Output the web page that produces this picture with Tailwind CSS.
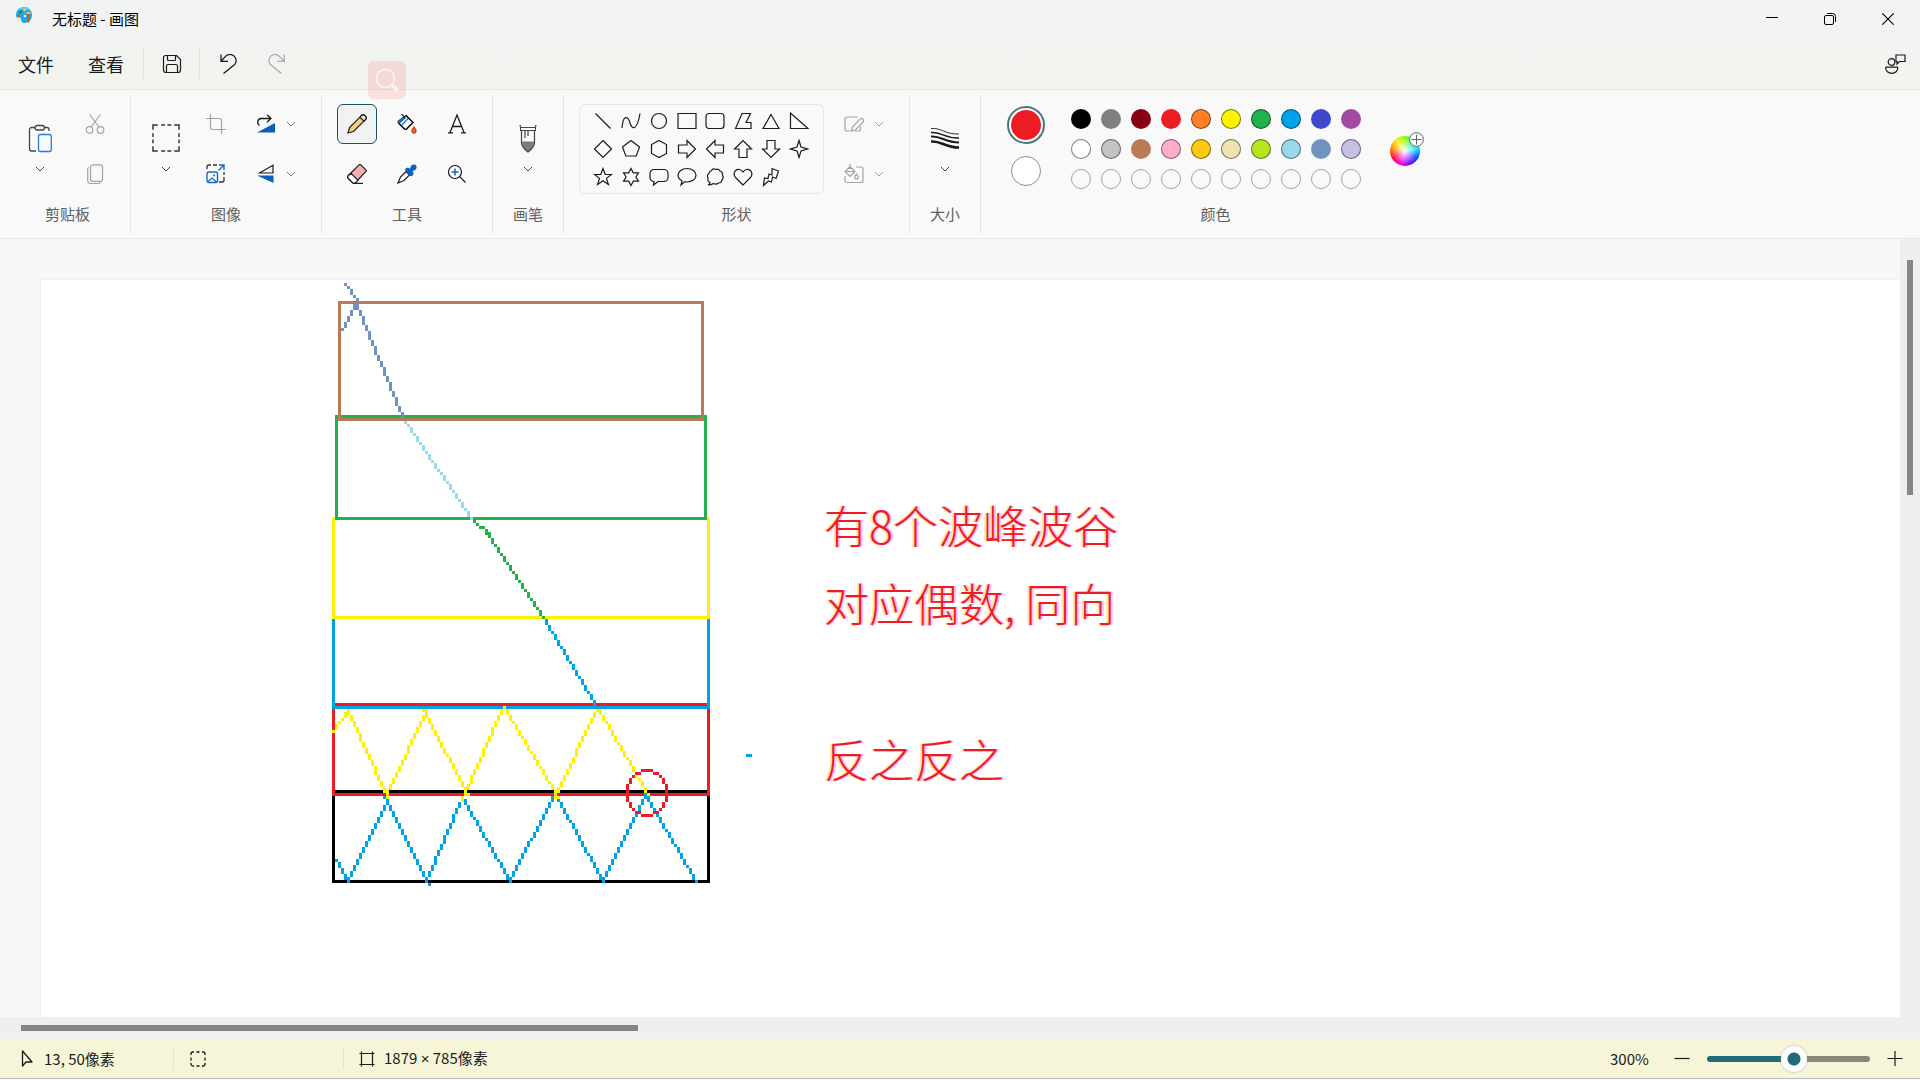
<!DOCTYPE html>
<html lang="zh-CN">
<head>
<meta charset="utf-8">
<title>无标题 - 画图</title>
<script src="https://cdn.jsdelivr.net/npm/@tailwindcss/browser@4"></script>
</head>
<body class="h-screen overflow-hidden flex flex-col pb-px bg-[#f9f9f9] text-[#1b1b1b] font-['Noto_Sans_CJK_SC',sans-serif] select-none">

<svg class="hidden">
  <symbol id="chev" viewBox="0 0 10 10"><path d="M1 3l4 4 4-4" fill="none" stroke="currentColor" stroke-width="1"/></symbol>
</svg>

<!-- Title bar and menu -->
<header class="relative flex flex-col bg-linear-to-b from-[#f1f4f4] to-[#f2f3ee] border-b border-[#e6e8e4]">
  <div class="flex items-center h-[38px] pl-4 pr-[3px]">
    <svg class="size-4 mb-2" viewBox="0 0 16 16">
      <path d="M8 0C3.400 0 0 3.600 0 8c0 2 1.200 2.800 2.600 2.500 1.500-.3 2.600.4 2.500 2C5 14.600 6 16 8.200 16 12.600 16 16 12.600 16 8S12.600 0 8 0z" fill="#1ba8ec"/>
      <path d="M8 0C5 0 2.500 1.600 1 4c3-2 9-3 14 .5C13.500 1.800 11 0 8 0z" fill="#55d0fa"/>
      <circle cx="8.500" cy="2.800" r="1.500" fill="#ffc928"/><circle cx="4.500" cy="5" r="1.600" fill="#17883b"/><circle cx="2.800" cy="8.800" r="1.300" fill="#e8502a"/><circle cx="9" cy="9" r="1.300" fill="#fff"/>
      <path d="M10.300 5.500h4.200v2.200l-1.200 1.100V15.500h-1.600V8.800l-1.400-1.100z" fill="#a4642b"/><path d="M10.300 5.200h4.200V7h-4.200z" fill="#e4c79a"/>
    </svg>
    <h1 class="ml-5 text-[15px] leading-5 text-black">无标题 - 画图</h1>
    <div class="ml-auto flex h-full">
      <button aria-label="最小化" class="w-[58px] grid place-items-center"><svg class="size-3" viewBox="0 0 12 12"><path d="M0 4.500h12" stroke="#000"/></svg></button>
      <button aria-label="还原" class="w-[58px] grid place-items-center"><svg class="size-3" viewBox="0 0 12 12" fill="none" stroke="#000"><rect x=".5" y="2.500" width="9" height="9" rx="1.500"/><path d="M3 .5h5.500a3 3 0 013 3V9"/></svg></button>
      <button aria-label="关闭" class="w-[58px] grid place-items-center"><svg class="size-3" viewBox="0 0 12 12"><path d="M.3.3l11.400 11.400M11.700.3L.3 11.700" stroke="#000" stroke-width="1.100"/></svg></button>
    </div>
  </div>
  <nav class="flex items-center h-[51px] pl-px pr-[14px]">
    <button class="w-[70px] text-[18px] leading-6">文件</button>
    <button class="w-[70px] text-[18px] leading-6">查看</button>
    <div class="ml-[2px] w-px h-[30px] bg-[#e2e4e0]"></div>
    <button aria-label="保存" class="w-[55px] grid place-items-center"><svg class="size-5" viewBox="0 0 20 20" fill="none" stroke="#1b1b1b" stroke-width="1.200"><path d="M3 1.500h11.500l4 4V16a2.500 2.500 0 01-2.500 2.500H4A2.500 2.500 0 011.500 16V3.500A2 2 0 013.500 1.500zM5.500 1.500v4a1 1 0 001 1h6a1 1 0 001-1v-4M4.500 18.500V12A1.500 1.500 0 016 10.500h8a1.500 1.500 0 011.500 1.500v6.500"/></svg></button>
    <div class="w-px h-[30px] bg-[#e2e4e0]"></div>
    <button aria-label="撤消" class="w-[57px] grid place-items-center"><svg class="size-5" viewBox="0 0 20 20" fill="none" stroke="#1b1b1b" stroke-width="1.300"><path d="M2 .5v6.800h7M2.300 7l4.200-4.600a6.100 6.100 0 018.900 0 6 6 0 010 8.400L4.500 19.500"/></svg></button>
    <button aria-label="重做" class="w-[38px] grid place-items-center" disabled><svg class="size-5" viewBox="0 0 20 20" fill="none" stroke="#a9a9a7" stroke-width="1.200"><path d="M18.300 .5v6.800h-7M18 7l-4.500-4.600a6.100 6.100 0 00-8.900 0 6 6 0 000 8.400L15.500 19.500"/></svg></button>
    <button aria-label="共享" class="ml-auto"><svg class="h-5 w-[21px]" viewBox="0 0 21 20" fill="none" stroke="#1b1b1b" stroke-width="1.200"><circle cx="6.500" cy="8" r="3.300"/><path d="M1.500 13.100h10.500a.8.800 0 01.8.8c0 3-2.500 5.400-6 5.400S.7 16.900.7 13.900a.8.800 0 01.8-.8zM11 1h9v6.500h-5.500L12 10V7.500h-1z"/></svg></button>
  </nav>
  <div class="absolute left-[368px] top-[61px] z-10 size-[38px] rounded-md bg-[#ff6b6b]/18 grid place-items-center">
    <svg class="size-6" viewBox="0 0 24 24" fill="none" stroke="#f8f3f0"><circle cx="10.500" cy="10.500" r="9" stroke-width="1.800"/><path d="M17.500 17.500l4 4" stroke-width="4" stroke-linecap="round"/></svg>
  </div>
</header>

<!-- Ribbon -->
<section class="flex py-[5px] h-[149px] shrink-0 border-b border-[#e7e7e7]">
  <div class="flex flex-col border-r border-[#e4e4e4]">
    <div class="flex gap-[15px] h-[100px] pt-[9px] pl-5 pr-[15px]">
      <button aria-label="粘贴" class="w-10 h-[90px] pt-[20px] flex flex-col items-center">
        <svg class="w-6 h-[29px]" viewBox="0 0 24 29" fill="none"><path d="M7 3.500H3.500A2 2 0 001.500 5.500v19.500a2 2 0 002 2H8M16.500 3.500h2.500a2 2 0 012 2V7" stroke="#444" stroke-width="1.300"/><rect x="7" y="1.500" width="9.500" height="4.500" rx="2.250" stroke="#444" stroke-width="1.300"/><rect x="10.500" y="10.500" width="12.800" height="17" rx="2" fill="#f5faff" stroke="#2b7cd3" stroke-width="1.300"/></svg>
        <svg class="size-[10px] mt-[11px] text-[#444]"><use href="#chev"/></svg>
      </button>
      <div class="flex flex-col gap-[10px]">
        <button aria-label="剪切" class="size-10 grid place-items-center"><svg class="size-5" viewBox="0 0 20 20" fill="none" stroke="#a3a3a3" stroke-width="1.200"><circle cx="4.500" cy="16" r="3.300"/><circle cx="15.500" cy="16" r="3.300"/><path d="M4.500.5L14 13M15.500.5L6 13"/></svg></button>
        <button aria-label="复制" class="size-10 grid place-items-center"><svg class="size-5" viewBox="0 0 20 20" fill="none" stroke="#a3a3a3" stroke-width="1.200"><rect x="5.500" y=".8" width="12" height="16.500" rx="2"/><path d="M4 3.200a2 2 0 00-1.300 2V16a3.500 3.500 0 003.500 3.500h7a2 2 0 002-1.200"/></svg></button>
      </div>
    </div>
    <div class="h-[38px] pl-[5px] text-center text-[15px] leading-[38px] text-[#5e5e5e]">剪贴板</div>
  </div>

  <div class="flex flex-col border-r border-[#e4e4e4]">
    <div class="flex gap-[10px] h-[100px] pt-[9px] pl-[15px] pr-[25px]">
      <button aria-label="选择" class="w-10 h-[90px] pt-[20px] flex flex-col items-center">
        <svg class="size-7" viewBox="0 0 29 29" fill="none" stroke="#333" stroke-width="1.500"><path d="M1 6V1h5M9.500 1h4M16 1h4M23 1h5v5M28 9.500v4M28 16v4M28 23v5h-5M20 28h-4M13.500 28h-4M6 28H1v-5M1 20v-4M1 13.500v-4"/></svg>
        <svg class="size-[10px] mt-3 text-[#444]"><use href="#chev"/></svg>
      </button>
      <div class="flex flex-col gap-[10px]">
        <button aria-label="裁剪" class="size-10 grid place-items-center"><svg class="size-5" viewBox="0 0 20 20" fill="none" stroke="#a3a3a3" stroke-width="1.200"><path d="M4.500 0v13a2.500 2.500 0 002.500 2.500h13M0 4.500h13A2.500 2.500 0 0115.500 7v13"/></svg></button>
        <button aria-label="调整大小" class="size-10 grid place-items-center"><svg class="size-5" viewBox="0 0 20 20" fill="none"><path d="M1 5V3a2 2 0 012-2h2M7 1h4M18 8v3M18 13v3a2 2 0 01-2 2h-3" stroke="#333" stroke-width="1.300"/><path d="M13 1h5v5M18 1l-5.500 5.500" stroke="#1768c0" stroke-width="1.400"/><rect x="1" y="8" width="10.500" height="10.500" rx="2" stroke="#1768c0" stroke-width="1.400"/><path d="M2 17.500l4-3.500 4.500 4" stroke="#1768c0" stroke-width="1.300"/><circle cx="8" cy="11.500" r="1" fill="#1768c0"/></svg></button>
      </div>
      <div class="flex flex-col gap-[10px]">
        <button aria-label="旋转" class="h-10 w-[50px] pl-[10px] flex items-center gap-[10px]"><svg class="size-5" viewBox="0 0 20 20"><path d="M3.500 11.500A3.800 3.800 0 015 4.500h9.500M11 .8l4 3.700-4 3.700" fill="none" stroke="#1b1b1b" stroke-width="1.300"/><path d="M19 9v9.500H1z" fill="#0a5fb9"/></svg><svg class="size-[10px] shrink-0 text-[#777]"><use href="#chev"/></svg></button>
        <button aria-label="翻转" class="h-10 w-[50px] pl-[10px] flex items-center gap-[10px]"><svg class="size-5" viewBox="0 0 20 20"><path d="M3.500 9L17 1.200V9z" fill="none" stroke="#1b1b1b" stroke-width="1.200"/><path d="M1 11.500h16.500V19z" fill="#0a5fb9"/></svg><svg class="size-[10px] shrink-0 text-[#777]"><use href="#chev"/></svg></button>
      </div>
    </div>
    <div class="h-[38px] text-center text-[15px] leading-[38px] text-[#5e5e5e]">图像</div>
  </div>

  <div class="flex flex-col border-r border-[#e4e4e4]">
    <div class="h-[100px] pt-[9px] px-[15px]">
      <div class="grid grid-cols-[repeat(3,40px)] gap-[10px]">
        <button aria-label="铅笔" class="size-10 grid place-items-center rounded-md border border-[#155361] bg-[#f2f2f2]"><svg class="size-5" viewBox="0 0 20 20" stroke="#1b1b1b" stroke-width="1.200"><path d="M1 19l1.500-5.500L14.200 1.900a2.800 2.800 0 014 4L6.500 17.500z" fill="#f2cf7c"/><path d="M13 3.200l1.200-1.300a2.800 2.800 0 014 4L17 7.200z" fill="#eee"/></svg></button>
        <button aria-label="填充" class="size-10 grid place-items-center"><svg class="size-5" viewBox="0 0 20 20" fill="none" stroke="#1b1b1b" stroke-width="1.200"><path d="M9 1.500l7 7-6.500 6.500a1.500 1.500 0 01-2 0L1.500 9a1.500 1.500 0 010-2z" fill="#fff"/><path d="M7 3L1.500 7.500l1 2L8.500 4z" fill="#1a6fc9" stroke="#1a6fc9" stroke-width="1"/><path d="M11.500 4L5 11" stroke="#1a6fc9"/><path d="M4.500 0l3.500 4M9 1.500l7 7-6.500 6.500a1.500 1.500 0 01-2 0L1.500 9"/><path d="M17 12.500c1 1.700 2.200 3 2.200 4.500a2.200 2.300 0 01-4.500 0c0-1.500 1.300-2.800 2.300-4.500z" fill="#f7592b" stroke="#8d2b10" stroke-width=".8"/></svg></button>
        <button aria-label="文本" class="size-10 grid place-items-center"><svg class="size-5" viewBox="0 0 20 20" fill="none" stroke="#1b1b1b" stroke-width="1.300"><path d="M3 18.500L10 1l7 17.500M5.500 12.500h9M1 18.800h5M14 18.800h5"/></svg></button>
        <button aria-label="橡皮擦" class="size-10 grid place-items-center"><svg class="size-5" viewBox="0 0 20 20" stroke="#1b1b1b" stroke-width="1.200"><path d="M1 12L12 .9a1.200 1.200 0 011.800 0l5 5a1.200 1.200 0 010 1.800L8.500 18.500a2 2 0 01-3 0L1 14a1.500 1.500 0 010-2z" fill="#f6aeb0"/><path d="M4 9.300l7 7-2.500 2.300a2 2 0 01-3 0L1 14a1.500 1.500 0 010-2z" fill="#fff"/><path d="M7 19.400h9"/></svg></button>
        <button aria-label="颜色选取器" class="size-10 grid place-items-center"><svg class="size-5" viewBox="0 0 20 20"><path d="M9 7.500L3.500 13 1 19l6-2.500 5.500-5.500z" fill="#fff" stroke="#1b1b1b" stroke-width="1.200"/><path d="M8.500 4.500l2.500-1 2 1.200C13.500 1.500 15.500 0 17.300.5 20 1 20.500 4.500 18 6l-2.500 1.200 1.200 2-1.200 2.500-2 .5L8 7z" fill="#0a63bd"/></svg></button>
        <button aria-label="放大镜" class="size-10 grid place-items-center"><svg class="size-5" viewBox="0 0 20 20" fill="none" stroke="#1b1b1b" stroke-width="1.200"><circle cx="8" cy="8" r="6.500"/><path d="M12.700 12.700l5.800 5.800"/><path d="M4.500 8h7M8 4.500v7" stroke="#1768c0" stroke-width="1.500"/></svg></button>
      </div>
    </div>
    <div class="h-[38px] text-center text-[15px] leading-[38px] text-[#5e5e5e]">工具</div>
  </div>

  <div class="flex flex-col border-r border-[#e4e4e4]">
    <div class="h-[100px] pt-[9px] px-[15px]">
      <button aria-label="画笔" class="w-10 h-[90px] pt-[20px] flex flex-col items-center">
        <svg class="w-[18px] h-[29px]" viewBox="0 0 18 29" fill="none" stroke="#444" stroke-width="1.200"><path d="M1 1c.8 2 .8 3.500.5 5.500h15c-.3-2-.3-3.500.5-5.500M1.500 3.500h15"/><path d="M3 17.500h12l-.5 4c-1 3-3.500 5-5.500 6.500-2-1.500-4.500-3.500-5.500-6.500z" fill="#7b7b7b" stroke="none"/><path d="M2.500 6.500v12c0 5 4 7.500 6.500 9.500 2.500-2 6.500-4.500 6.500-9.500v-12M6 7v7M9 7v5"/></svg>
        <svg class="size-[10px] mt-[11px] text-[#444]"><use href="#chev"/></svg>
      </button>
    </div>
    <div class="h-[38px] text-center text-[15px] leading-[38px] text-[#5e5e5e]">画笔</div>
  </div>

  <div class="flex flex-col border-r border-[#e4e4e4]">
    <div class="flex gap-[10px] h-[100px] pt-[9px] pl-[15px] pr-[25px]">
      <div id="shapes" class="grid grid-cols-[repeat(8,28px)] auto-rows-[28px] w-[245px] h-[90px] pl-[9px] pt-[2px] border border-[#e6e6e6] rounded-md"></div>
      <div class="flex flex-col gap-[10px] text-[#a3a3a3]">
        <button aria-label="形状轮廓" class="h-10 w-[50px] pl-[10px] flex items-center gap-[10px]"><svg class="size-5" viewBox="0 0 20 20" fill="none" stroke="currentColor" stroke-width="1.200"><path d="M14 3H3a2 2 0 00-2 2v10a2 2 0 002 2h3.500M16.500 12.500V15a2 2 0 01-2 2H11"/><path d="M7.500 17l1-4L16 5.200a2 2 0 013 2.700L11.500 16z"/></svg><svg class="size-[10px] shrink-0"><use href="#chev"/></svg></button>
        <button aria-label="形状填充" class="h-10 w-[50px] pl-[10px] flex items-center gap-[10px]"><svg class="size-5" viewBox="0 0 20 20" fill="none" stroke="currentColor" stroke-width="1.200"><path d="M12 3h5a2 2 0 012 2v11.500a2 2 0 01-2 2H3a2 2 0 01-2-2V12"/><path d="M6 2.500L11 7.500 6 12.500 1 7.500zM6 0v5M1.500 7.500h9.500M12.500 10c1 1.500 1.700 2.300 1.700 3.500a1.700 1.700 0 01-3.400 0c0-1.200.7-2 1.700-3.500z"/></svg><svg class="size-[10px] shrink-0"><use href="#chev"/></svg></button>
      </div>
    </div>
    <div class="h-[38px] text-center text-[15px] leading-[38px] text-[#5e5e5e]">形状</div>
  </div>

  <div class="flex flex-col border-r border-[#e4e4e4]">
    <div class="h-[100px] pt-[9px] px-[15px]">
      <button aria-label="大小" class="w-10 h-[90px] pt-[20px] flex flex-col items-center">
        <svg class="w-7 h-[29px]" viewBox="0 0 28 29" fill="none" stroke="#1b1b1b"><path d="M0 4.500c10-1 14 6 28 5.500" stroke-width=".9"/><path d="M0 8.500c10-1 14 6 28 5.500" stroke-width="1.500"/><path d="M0 12.500c10-1 14 6 28 6" stroke-width="2"/><path d="M0 17.500c10-1 14 6 28 6" stroke-width="2.600"/></svg>
        <svg class="size-[10px] mt-[11px] text-[#444]"><use href="#chev"/></svg>
      </button>
    </div>
    <div class="h-[38px] text-center text-[15px] leading-[38px] text-[#5e5e5e]">大小</div>
  </div>

  <div class="flex flex-col w-[469px]">
    <div class="flex h-[100px] pt-[11px] pl-[25px]">
      <div class="flex flex-col items-center gap-3 w-10">
        <button aria-label="颜色 1" class="size-[38px] rounded-full border-2 border-[#4c7680] grid place-items-center bg-white"><span class="size-[30px] rounded-full bg-[#ed1c24]"></span></button>
        <button aria-label="颜色 2" class="size-[30px] rounded-full border border-[#8e8e8e] bg-white"></button>
      </div>
      <div id="palette" class="ml-[25px] mt-[3px] grid grid-cols-[repeat(10,20px)] auto-rows-[20px] gap-[10px]"></div>
      <button aria-label="编辑颜色" class="relative ml-[29px] mt-[30px] size-[30px] rounded-full bg-[conic-gradient(#8aff00,#00ff80,#00e1ff,#0040ff,#7a00ff,#ff00e0,#ff0040,#ff8a00,#ffee00,#8aff00)]">
        <span class="absolute inset-0 rounded-full bg-[radial-gradient(circle,white,transparent_65%)]"></span>
        <svg class="absolute left-[19px] -top-1 size-[15px]" viewBox="0 0 15 15" fill="#fafafa" stroke="#666"><circle cx="7.500" cy="7.500" r="6.900"/><path d="M7.500 2.500v10M2.500 7.500h10"/></svg>
      </button>
    </div>
    <div class="h-[38px] text-center text-[15px] leading-[38px] text-[#5e5e5e]">颜色</div>
  </div>
</section>

<!-- Drawing area -->
<main class="flex-1 min-h-0 flex">
  <div class="flex-1 min-w-0 overflow-hidden bg-[#f8f8f8] pl-[41px] pt-[41px]">
    <div class="relative w-[5637px] h-[2355px] bg-white shadow-[0_0_2px_#e4e4e4]">
      <svg id="drawing" class="size-full" viewBox="0 0 1879 785" shape-rendering="crispEdges"></svg>
      <p class="absolute left-[783px] top-[206px] whitespace-pre font-light text-[45px] leading-[78px] text-[#ed1c24] [text-shadow:-2px_0_#ffe3b3,2px_0_#f6c4fb]">有8个波峰波谷
对应偶数, 同向

反之反之</p>
    </div>
  </div>
  <div class="w-5 bg-[#efefef] pt-[21px] pl-[7px]"><div class="w-[6px] h-[235px] bg-[#868686]"></div></div>
</main>
<div class="h-[22px] shrink-0 bg-[#efefef] pt-2 pl-[21px]"><div class="w-[617px] h-[6px] bg-[#868686]"></div></div>

<!-- Status bar -->
<footer class="h-[40px] shrink-0 flex items-center bg-[#f6f5d8] border-b border-[#b9b9b5] text-[15px] leading-5">
  <svg class="ml-[21px] w-3 h-[18px]" viewBox="0 0 12 18" fill="none" stroke="#1b1b1b" stroke-width="1.300"><path d="M1.500 1v15l3.500-4h6z" stroke-linejoin="round"/></svg>
  <span class="ml-[11px] w-[129px]">13, 50像素</span>
  <div class="w-px h-5 bg-[#e6e5c8]"></div>
  <svg class="ml-4 size-4" viewBox="0 0 16 16" fill="none" stroke="#1b1b1b" stroke-width="1.300"><path d="M1 4V3a2 2 0 012-2h1M6.500 1h3M12 1h1a2 2 0 012 2v1M15 6.500v3M15 12v1a2 2 0 01-2 2h-1M9.500 15h-3M4 15H3a2 2 0 01-2-2v-1M1 9.500v-3"/></svg>
  <div class="ml-[137px] w-px h-5 bg-[#e6e5c8]"></div>
  <svg class="ml-[15px] size-4" viewBox="0 0 16 16" fill="none" stroke="#1b1b1b" stroke-width="1.200"><path d="M2.500 .5v15M13.500 .5v15M.5 2.500h15M.5 13.500h15"/></svg>
  <span class="ml-[9px]">1879 <span class="font-['Liberation_Sans',sans-serif]">×</span> 785像素</span>
  <label for="zoom" class="ml-auto w-[62px]">300%</label>
  <button aria-label="缩小" class="w-[20px] grid place-items-center"><svg class="size-4" viewBox="0 0 16 16"><path d="M.5 7.500h15" stroke="#1b1b1b" stroke-width="1.200"/></svg></button>
  <input id="zoom" type="range" min="0" max="100" value="54" class="ml-[15px] w-[163px] h-[26px] appearance-none bg-transparent [&::-webkit-slider-runnable-track]:h-[6px] [&::-webkit-slider-runnable-track]:rounded-full [&::-webkit-slider-runnable-track]:bg-[linear-gradient(90deg,#1f6b78_54%,#87877a_54%)] [&::-webkit-slider-thumb]:appearance-none [&::-webkit-slider-thumb]:size-[26px] [&::-webkit-slider-thumb]:-mt-[10px] [&::-webkit-slider-thumb]:rounded-full [&::-webkit-slider-thumb]:bg-[radial-gradient(circle,#1f6b78_6px,white_7px)] [&::-webkit-slider-thumb]:shadow-[0_0_2px_#999]">
  <button aria-label="放大" class="ml-[15px] mr-[15px] w-[20px] grid place-items-center"><svg class="size-4" viewBox="0 0 16 16"><path d="M.5 7.500h15M8 0v15" stroke="#1b1b1b" stroke-width="1.200"/></svg></button>
</footer>

<script>
const NS = 'http://www.w3.org/2000/svg';

// Shape gallery, one 20x20 outline each
const shapes = [
  ['直线', 'M2.500 2.500l15 15'],
  ['曲线', 'M1 17c1-14 6-12 8-5s7 8 10-9.500'],
  ['椭圆', 'M17.500 10a7.500 7.500 0 11-15 0 7.500 7.500 0 0115 0z'],
  ['矩形', 'M1 2.500h18v15H1z'],
  ['圆角矩形', 'M4 2.500h12a3 3 0 013 3v9a3 3 0 01-3 3H4a3 3 0 01-3-3v-9a3 3 0 013-3z'],
  ['多边形', 'M2.500 17.500L9 2.500h8.500l-4.500 9h5v6z'],
  ['三角形', 'M10 3.500l8 14H2z'],
  ['直角三角形', 'M1.500 2v15.500H19z'],
  ['菱形', 'M10 1.500l8.500 8.500-8.500 8.500L1.500 10z'],
  ['五边形', 'M10 1.500l8.500 6.500-3.300 9H4.800L1.500 8z'],
  ['六边形', 'M10 1.500l7.500 4v9l-7.500 4-7.500-4v-9z'],
  ['右箭头', 'M1.500 6H10V1.500l8.500 8.500-8.500 8.500V14H1.500z'],
  ['左箭头', 'M18.500 6H10V1.500L1.500 10l8.500 8.500V14h8.500z'],
  ['上箭头', 'M6 18.500V10H1.500L10 1.500l8.500 8.500H14v8.500z'],
  ['下箭头', 'M6 1.500V10H1.500l8.500 8.500 8.500-8.500H14V1.500z'],
  ['四角星', 'M10 1.500l2 6.500 6.500 2-6.500 2-2 6.500L8 12l-6.500-2L8 8z'],
  ['五角星', 'M10 1.500l2.200 5.800 6.300.2-5 3.900 1.900 6.100-5.400-3.700-5.400 3.700 1.900-6.100-5-3.900 6.300-.2z'],
  ['六角星', 'M10 1.500l2.300 4.300h5.200L14.900 10l2.600 4.200h-5.200L10 18.500l-2.300-4.300H2.500L5.100 10 2.500 5.800h5.200z'],
  ['圆角标注', 'M5 2.500h10a4 4 0 014 4v4a4 4 0 01-4 4H9l-4.500 3.500.5-3.500a4 4 0 01-4-4v-4a4 4 0 014-4z'],
  ['椭圆标注', 'M10 1.500c5 0 9 3 9 6.800s-4 6.700-9 6.700l-2.500-.2L4 18l1-4.200C2.500 12.500 1 10.500 1 8.300 1 4.500 5 1.500 10 1.500z'],
  ['云形标注', 'M6 4q2-3 4.500-1.500 3-1 4.500 1.500 3 1 2.500 4 1.500 3-.5 5-.5 3-3.500 3-2.500 2-5 .5Q6.500 18 3 18q2-1 2-2.500Q2 14 3 11 1.500 8 4 6.500 4 4.500 6 4z'],
  ['心形', 'M10 18L2.500 10.500C-1 6 3 1.500 6.500 2.500 8.500 3 10 5 10 5s1.500-2 3.500-2.500c3.500-1 7.500 3.500 4 8z'],
  ['闪电', 'M11 1.500l6.500 2.500-2.500 7.500-3.500-1.500-1 5-3-1L2.500 18.500l1-7.500 3.500.5 1-4.500 3 1z']
];
document.getElementById('shapes').innerHTML = shapes.map(([name, d]) =>
  `<button aria-label="${name}" class="grid place-items-center"><svg class="size-5" viewBox="0 0 20 20" fill="none" stroke="#1b1b1b" stroke-width="1.200"><path d="${d}"/></svg></button>`).join('');

// Colour palette, '' is an empty custom slot
const colours = ['#000000','#7f7f7f','#880015','#ed1c24','#ff7f27','#fff200','#22b14c','#00a2e8','#3f48cc','#a349a4',
  '#ffffff','#c3c3c3','#b97a57','#ffaec9','#ffc90e','#efe4b0','#b5e61d','#99d9ea','#7092be','#c8bfe7',
  '','','','','','','','','',''];
const unringed = ['#000000','#7f7f7f','#880015','#ed1c24','#3f48cc','#a349a4','#b97a57','#7092be'];
document.getElementById('palette').innerHTML = colours.map(c => {
  const ring = !c ? 'border-[#a3a3a3]' : unringed.includes(c) ? 'border-transparent' : 'border-black/50';
  return `<button aria-label="${c || '自定义颜色'}" class="rounded-full border ${ring}" style="background:${c || 'transparent'}"></button>`;
}).join('');

// Drawing, in canvas pixels
const svg = document.getElementById('drawing');
function fill(d, colour) {
  const p = document.createElementNS(NS, 'path');
  p.setAttribute('d', d);
  p.setAttribute('fill', colour);
  svg.appendChild(p);
}
const cell = (x, y, w = 1, h = 1) => `M${x} ${y}h${w}v${h}h${-w}z`;
const frame = (x1, y1, x2, y2, c) => fill(cell(x1, y1, x2 - x1 + 1) + cell(x1, y2, x2 - x1 + 1) + cell(x1, y1, 1, y2 - y1 + 1) + cell(x2, y1, 1, y2 - y1 + 1), c);
// A pencil stroke: one run of pixels per column, top to bottom
function stroke(x, y, dx, runs, c) {
  let d = '';
  for (const r of runs) { d += cell(x, y, 1, +r); x += dx; y += +r; }
  fill(d, c);
}
const BLACK = '#000', RED = '#ed1c24', BLUE = '#00a2e8', YELLOW = '#fff200', GREEN = '#22b14c', BROWN = '#b97a57', SKY = '#99d9ea', SLATE = '#7092be';

frame(97, 170, 222, 200, BLACK);
frame(97, 141, 222, 171, RED);
frame(97, 112, 222, 142, BLUE);
frame(97, 79, 222, 112, YELLOW);
frame(98, 45, 221, 79, GREEN);
frame(99, 7, 220, 46, BROWN);

fill(cell(98,193) + cell(102,199,1,2) + cell(114,172) + cell(128,199,1,2) + cell(129,201) + cell(156,199,1,2) + cell(187,199,1,2) + cell(201,171,1,2), BLUE);
stroke(99, 194, 1, '222', BLUE);
stroke(115, 173, -1, '2222222222222', BLUE);
stroke(115, 173, 1, '2222222222222', BLUE);
stroke(139, 174, -1, '22322322322', BLUE);
stroke(141, 173, 1, '222122212221222', BLUE);
stroke(170, 172, -1, '22222221222222', BLUE);
stroke(172, 173, 1, '122212222212222', BLUE);
stroke(200, 173, -1, '2222222222222', BLUE);
stroke(202, 172, 1, '22212212212221221', BLUE);
stroke(168, 113, 1, '22122122122122122', BLUE);
fill(cell(235,158,2), BLUE);

fill(cell(97,150) + cell(98,148,1,2) + cell(99,147) + cell(100,146) + cell(101,144,1,2) + cell(102,143,1,2) + cell(115,170,1,3), YELLOW);
stroke(103, 145, 1, '222322223222', YELLOW);
stroke(127, 145, -1, '222223222222', YELLOW);
fill(cell(127,143,2) + cell(128,143,1,3) + cell(142,171) + cell(140,172,1,2) + cell(154,142), YELLOW);
stroke(129, 146, 1, '2222221222223', YELLOW);
stroke(153, 143, -1, '222322322232', YELLOW);
stroke(155, 143, 1, '22122122122122123', YELLOW);
stroke(184, 144, -1, '2222223222222', YELLOW);
fill(cell(172,172) + cell(185,143) + cell(186,143,1,2) + cell(202,171), YELLOW);
stroke(187, 145, 1, '212221221222122', YELLOW);

fill(cell(200,163,4) + cell(200,178,4) + cell(198,164,2) + cell(204,164,2) + cell(198,177,2) + cell(204,177,2)
  + cell(197,165) + cell(206,165) + cell(197,176) + cell(206,176)
  + cell(196,166,1,2) + cell(207,166,1,2) + cell(196,174,1,2) + cell(207,174,1,2)
  + cell(195,168,1,6) + cell(208,168,1,6), RED);

fill(cell(144,79,1,2) + cell(145,81) + cell(146,82,2) + cell(148,83,1,2) + cell(149,84,1,2), GREEN);
stroke(150, 86, 1, '212121212121212121', GREEN);
stroke(121, 47, 1, '11212121212112121212121', SKY);
fill(cell(101,1) + cell(102,2) + cell(103,3,1,2) + cell(104,5) + cell(105,6) + cell(106,7) + cell(104,8,2,2), SLATE);
stroke(106, 10, 1, '232323223232322', SLATE);
stroke(103, 10, -1, '2221', SLATE);
</script>
</body>
</html>
